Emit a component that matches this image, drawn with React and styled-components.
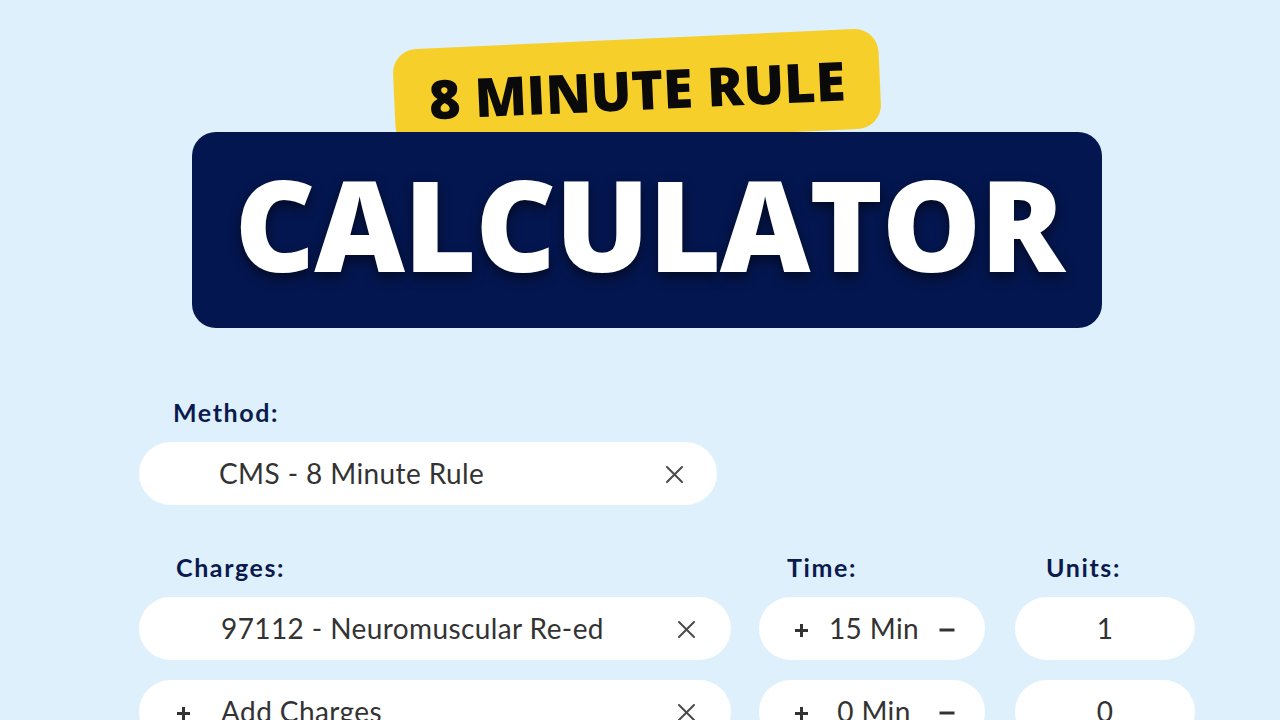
import React from "react";
import styled, { createGlobalStyle } from "styled-components";

const GlobalStyle = createGlobalStyle`
  html, body {
    margin: 0;
    padding: 0;
    background: #dff0fd;
  }
  * { box-sizing: border-box; }
`;

const Page = styled.div`
  width: 1280px;
  height: 720px;
  overflow: hidden;
  background: #dff0fd;
  font-family: "Lato", "Noto Sans", sans-serif;
`;

const Hero = styled.header`
  display: flex;
  flex-direction: column;
  align-items: center;
  padding-top: 39px;
  padding-left: 14px;
`;

const Badge = styled.div`
  position: relative;
  z-index: 0;
  width: 486px;
  height: 100px;
  margin-left: -20px;
  margin-bottom: -7px;
  border-radius: 24px;
  background: #f7cf2b;
  transform: rotate(-2.6deg);
  display: flex;
  align-items: center;
  justify-content: center;
  font-family: "Open Sans", sans-serif;
  font-weight: 800;
  font-size: 54px;
  color: #0a0a0a;
  line-height: 1;
`;

const TitleBox = styled.div`
  position: relative;
  z-index: 1;
  width: 910px;
  height: 196px;
  border-radius: 24px;
  background: #04164f;
  display: flex;
  align-items: center;
  justify-content: center;
  padding-bottom: 14px;
  padding-left: 4px;
  font-family: "Open Sans", sans-serif;
  font-weight: 800;
  font-size: 125px;
  letter-spacing: -1.3px;
  line-height: 1;
  color: #ffffff;
  text-shadow: 0 5px 12px rgba(0, 0, 0, 0.55);
`;

const Form = styled.section`
  padding: 69px 0 0 139px;
  display: flex;
  flex-direction: column;
`;

const Label = styled.div`
  font-weight: 700;
  font-size: 25px;
  line-height: 30px;
  letter-spacing: 1.6px;
  color: #0b1a4d;
  padding-left: ${(p) => p.$indent}px;
  margin-bottom: 15px;
`;

const HeadCell = styled(Label)`
  margin-bottom: -5px;
`;

const Pill = styled.div`
  height: 63px;
  width: ${(p) => p.$w}px;
  border-radius: 32px;
  background: #ffffff;
  display: flex;
  align-items: center;
  color: #333333;
  font-size: 28px;
  letter-spacing: 0.4px;
  padding-bottom: 2px;
`;

const SelectPill = styled(Pill)`
  padding-left: ${(p) => p.$pad}px;
  padding-right: ${(p) => (p.$w > 585 ? 35 : 33)}px;
`;

const Lead = styled.span`
  width: 52px;
  padding-left: 7px;
  padding-top: 6px;
  display: flex;
  align-items: center;
`;

const Value = styled.span`
  flex: 1;
`;

const TimePill = styled(Pill)`
  padding-left: 35px;
  padding-right: 30px;
`;

const MinText = styled.span`
  flex: 1;
  text-align: center;
`;

const UnitPill = styled(Pill)`
  justify-content: center;
  margin-left: 2px;
`;

const Grid = styled.div`
  margin-top: 47px;
  display: grid;
  grid-template-columns: 592px 226px 180px;
  column-gap: 28px;
  row-gap: 20px;
`;

const IconBtn = styled.span`
  display: flex;
  align-items: center;
  justify-content: center;
  color: #4a4a4a;
  padding-top: ${(p) => p.$drop ?? 3}px;
`;

const Cross = () => (
  <svg width="19" height="19" viewBox="0 0 19 19" fill="none">
    <path d="M2 2L17 17M17 2L2 17" stroke="currentColor" strokeWidth="2" strokeLinecap="round" />
  </svg>
);

const Plus = () => (
  <svg width="15" height="15" viewBox="0 0 15 15" fill="none">
    <path d="M7.5 1V14M1 7.5H14" stroke="#333" strokeWidth="3" />
  </svg>
);

const Minus = () => (
  <svg width="16" height="16" viewBox="0 0 16 16" fill="none">
    <path d="M0.5 8H15.5" stroke="#333" strokeWidth="3" />
  </svg>
);

const charges = [
  { code: "97112 - Neuromuscular Re-ed", minutes: 15, units: 1, filled: true },
  { code: "Add Charges", minutes: 0, units: 0, filled: false },
];

export default function App() {
  return (
    <Page>
      <GlobalStyle />
      <Hero>
        <Badge>8 MINUTE RULE</Badge>
        <TitleBox>CALCULATOR</TitleBox>
      </Hero>
      <Form>
        <div>
          <Label $indent={34}>Method:</Label>
          <SelectPill $w={578} $pad={28}>
            <Lead />
            <Value>CMS - 8 Minute Rule</Value>
            <IconBtn>
              <Cross />
            </IconBtn>
          </SelectPill>
        </div>
        <Grid>
          <HeadCell $indent={37}>Charges:</HeadCell>
          <HeadCell $indent={28}>Time:</HeadCell>
          <HeadCell $indent={33}>Units:</HeadCell>
          {charges.map((c) => (
            <React.Fragment key={c.code}>
              <SelectPill $w={592} $pad={30}>
                <Lead>{!c.filled && <Plus />}</Lead>
                <Value>{c.code}</Value>
                <IconBtn>
                  <Cross />
                </IconBtn>
              </SelectPill>
              <TimePill $w={226}>
                <IconBtn $drop={6}>
                  <Plus />
                </IconBtn>
                <MinText>{c.minutes} Min</MinText>
                <IconBtn $drop={5}>
                  <Minus />
                </IconBtn>
              </TimePill>
              <UnitPill $w={180}>{c.units}</UnitPill>
            </React.Fragment>
          ))}
        </Grid>
      </Form>
    </Page>
  );
}
